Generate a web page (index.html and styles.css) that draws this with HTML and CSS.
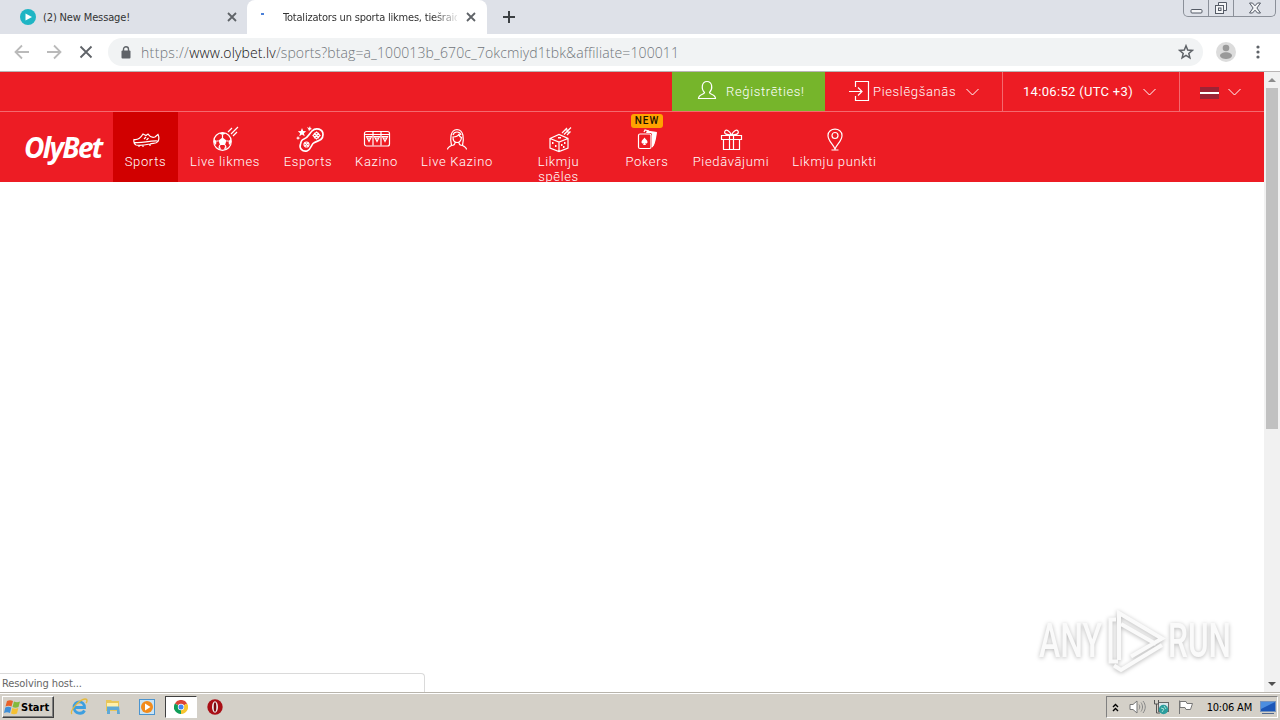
FILE: index.html
```html
<!DOCTYPE html>
<html lang="lv">

<head>
  <meta charset="UTF-8" />
  <title>Totalizators un sporta likmes</title>
  <link rel="stylesheet" href="styles.css">
</head>

<body>
  <!-- Tabs -->
  <div class="tabstrip">
    <div class="tab">
      <svg class="favicon" width="16" height="16" viewBox="0 0 16 16">
        <circle cx="8" cy="8" r="8" fill="#1fb5c4" />
        <path d="M5.5 4.5v7L12 8z" fill="#fff" />
      </svg>
      <span class="tab-title">(2) New Message!</span>
      <svg class="close" width="10" height="10" viewBox="0 0 10 10"><path d="M1 1l8 8M9 1L1 9" /></svg>
    </div>
    <div class="tab active">
      <span class="spinner"></span>
      <span class="tab-title fade">Totalizators un sporta likmes, tiešraid</span>
      <svg class="close" width="10" height="10" viewBox="0 0 10 10"><path d="M1 1l8 8M9 1L1 9" /></svg>
    </div>
    <svg class="new-tab" width="12" height="12" viewBox="0 0 12 12"><path d="M6 0v12M0 6h12" /></svg>
    <div class="window-buttons">
      <span class="wb-min"><svg width="13" height="14" viewBox="0 0 13 14"><rect x="1" y="8.5" width="11" height="3.5" rx="1" /></svg></span>
      <span class="wb-max"><svg width="14" height="14" viewBox="0 0 14 14"><path d="M4.500 4V1.500h8v8H10" /><rect x="1.500" y="4.500" width="8" height="8" /><rect x="4.500" y="7" width="2.500" height="2.500" /></svg></span>
      <span class="wb-close"><svg width="14" height="12" viewBox="0 0 14 12"><path d="M1.500 1h3L7 3.800 9.500 1h3L8.900 6l3.600 5h-3L7 8.200 4.500 11h-3L5.100 6z" /></svg></span>
    </div>
  </div>

  <!-- Toolbar -->
  <div class="toolbar">
    <svg class="tool-icon dim" width="16" height="16" viewBox="0 0 16 16"><path d="M15 8H2M8 1.500L1.500 8 8 14.500" /></svg>
    <svg class="tool-icon dim" width="16" height="16" viewBox="0 0 16 16"><path d="M1 8h13M8 1.500L14.500 8 8 14.500" /></svg>
    <svg class="tool-icon" width="16" height="16" viewBox="0 0 16 16"><path d="M2.500 2.500l11 11M13.500 2.500l-11 11" /></svg>
    <div class="omnibox">
      <svg width="10" height="13" viewBox="0 0 10 13">
        <rect x="0.500" y="4.500" width="9" height="8" rx="1" fill="#5f6368" />
        <path d="M2.500 5V3.200a2.500 2.500 0 0 1 5 0V5" fill="none" stroke="#5f6368" stroke-width="1.400" />
      </svg>
      <span class="url"><span class="scheme">https://</span><span class="host">www.olybet.lv</span><span class="path">/sports?btag=a_100013b_670c_7okcmiyd1tbk&amp;affiliate=100011</span></span>
      <svg class="star" width="16" height="16" viewBox="0 0 16 16"><path d="M8 1.800l1.700 4.300 4.600.3-3.500 3 1.100 4.500L8 11.400l-3.900 2.500 1.100-4.500-3.500-3 4.600-.3z" /></svg>
    </div>
    <svg class="avatar" width="20" height="20" viewBox="0 0 20 20">
      <circle cx="10" cy="10" r="10" fill="#dcdcdc" />
      <circle cx="10" cy="6" r="3.300" fill="#999" />
      <path d="M4 14c0-5 12-5 12 0-1 4-11 4-12 0z" fill="#999" />
    </svg>
    <svg class="menu-dots" width="4" height="14" viewBox="0 0 4 14"><circle cx="2" cy="2" r="1.600" /><circle cx="2" cy="7" r="1.600" /><circle cx="2" cy="12" r="1.600" /></svg>
  </div>

  <div class="viewport">
    <div class="page">
      <div class="topbar">
        <div class="register">
          <svg width="20" height="20" viewBox="0 0 20 20"><path d="M7.500 12.500C4 9 4.500 1.500 10 1.500S16 9 12.500 12.500c0 2 6 1.500 6 6h-17c0-4.500 6-4 6-6z" /></svg>
          <span>Reģistrēties!</span>
        </div>
        <div class="login">
          <svg width="21" height="21" viewBox="0 0 21 21"><path d="M6.500 6V.5h13v19h-13V15M0 10.500h12M9 6.500l4 4-4 4" /></svg>
          <span>Pieslēgšanās</span>
          <svg class="chevron" width="13" height="8" viewBox="0 0 13 8"><path d="M.5 1l6 6 6-6" /></svg>
        </div>
        <div class="clock">
          <span>14:06:52 (UTC +3)</span>
          <svg class="chevron" width="13" height="8" viewBox="0 0 13 8"><path d="M.5 1l6 6 6-6" /></svg>
        </div>
        <div class="lang">
          <span class="flag"></span>
          <svg class="chevron" width="13" height="8" viewBox="0 0 13 8"><path d="M.5 1l6 6 6-6" /></svg>
        </div>
      </div>

      <div class="nav">
        <div class="logo">OlyBet</div>
        <div class="nav-item active">
          <svg width="28" height="28" viewBox="0 0 28 28"><path d="M2 14.500c3 .5 6-.5 9-5.500l3 1.500 2-1.500c2 3 4 4 7 3l3-2.500c1 2 1 5 0 7-2 2.500-5 1.500-8 2.500-5 1-10 2-14 1-2-1-2.500-3-2-5.500zM2.500 17.500c8 1 14-2 23-1.500M12 14l2-2M14.500 15l2-2M7 20v2M11 20v2M18 19v2" /></svg>
          <span>Sports</span>
        </div>
        <div class="nav-item w-live">
          <svg width="28" height="28" viewBox="0 0 28 28"><circle cx="11.500" cy="16.500" r="8.800" /><path class="fill" d="M11.500 12.500l4 3-1.500 4.500H9l-1.500-4.500zM8 8.500l3.500 1.500L15 8.500l-3.500-1zM3 14l2.500 2-.5 4-2-2zM20 14l-2.500 2 .5 4 2-2zM7 23l2-1.500 1 3zM16 23l-2-1.500-1 3z" /><path d="M11.500 10v3M5.500 16h2M17.500 16h-2M9 20l-1 2M14 20l1 2M17 7l4-4M20 9l7-7M22 11l4-4" /></svg>
          <span>Live likmes</span>
        </div>
        <div class="nav-item w-esports">
          <svg width="28" height="28" viewBox="0 0 28 28"><path class="bold" d="M8 14c4-1 5-5 8-8 4-4 11-2 11 3.500 0 7-7 6-10 9-2 2-2 6-6 7.500-5 1-8-3-6.500-7 .5-2.500 1.500-4.500 3.500-5z" /><circle cx="10.500" cy="19.500" r="2.500" /><path d="M9 18l3 3M12 18l-3 3M18 8l5 5M23 8l-5 5M20.500 7l3.500 3.500-3.500 3.500L17 10.500z" /><path class="fill" d="M6 3l1.200 3 3 .2-2.300 2 .8 3L6 9.500l-2.700 1.700.8-3-2.300-2 3-.2zM11 2l2 1 1-2 .5 2 1.500 1-2 .7-1 1.500-.5-1.700zM2 11l.7 1.500 1.800.5-1.800.7L2 15l-.7-1.300L0 13l1.300-.5z" /></svg>
          <span>Esports</span>
        </div>
        <div class="nav-item w-kazino">
          <svg width="28" height="28" viewBox="0 0 28 28"><rect x="1.500" y="6.500" width="25" height="14.500" rx="2" /><path d="M1.500 9.500h25M10 6.500v14M18 6.500v14M3.500 11.500h5L6 16.500zM11.500 11.500h5l-2.500 5zM19.500 11.500h5l-2.500 5zM5 13h2M13 13h2M21 13h2" /></svg>
          <span>Kazino</span>
        </div>
        <div class="nav-item w-livekaz">
          <svg width="28" height="28" viewBox="0 0 28 28"><path d="M4.500 24.500c0-2 2-3 4-4C7 14 7 5 14 4.500 21 5 21 14 19.500 20.500c2 1 4 2 4 4M8.500 20.500c3 0 3.500-1 3.500-3M19.500 20.500c-3 0-3.500-1-3.500-3M10 12c4 0 5-1 6-3 0 2 1 3 2.500 3.500C18 16 16 17.500 14 17.500S10 16 10 12zM10 10c1-4 7-4 8 0" /></svg>
          <span>Live Kazino</span>
        </div>
        <div class="nav-item w-speles">
          <svg width="28" height="28" viewBox="0 0 28 28"><path d="M5 13.500l9-4 9 4v9.500l-9 3.500L5 23zM5 13.500l9 3.500 9-3.500M14 17v9.500M17 8l5-5M19 9.500l7-7M22 10l3.500-3.500M20 5h3M22 7h3" /><path class="fill" d="M13 12h3v1.500h-3zM7 17h1.500v2H7zM10 20h1.500v2H10zM16 19h1.500v2H16zM19 17h1.500v2H19zM18 21h1.500v2H18z" /></svg>
          <span>Likmju spēles</span>
        </div>
        <div class="nav-item w-pokers">
          <span class="badge">NEW</span>
          <svg width="28" height="28" viewBox="0 0 28 28"><rect x="5.500" y="9" width="12.500" height="14.500" rx="1.500" /><path class="fill" d="M11.500 12.500c1 2 3 2.500 3 4.500 0 1.500-1.500 2-2.500 1l1 2h-3l1-2c-1 1-2.500.5-2.500-1 0-2 2-2.500 3-4.500zM14 5.500l10 1.500-3 13-2 2V9.500c0-1-1-1.500-2-1.500h-4z" /><path d="M11 7l1-2 4 1M19 22c2-2 4-9 4-14" /></svg>
          <span>Pokers</span>
        </div>
        <div class="nav-item w-offers">
          <svg width="28" height="28" viewBox="0 0 28 28"><path d="M4.500 10.500h20v4h-20zM6.500 14.500h16v10h-16zM12.500 10.500v14M16.500 10.500v14M14.500 10c-2-4-5-6-6.500-4-1.500 3 2 4 6.500 4s8-1 6.500-4c-1.500-2-4.500 0-6.500 4z" /></svg>
          <span>Piedāvājumi</span>
        </div>
        <div class="nav-item w-punkti">
          <svg width="28" height="28" viewBox="0 0 28 28"><path d="M14 24c-2-5-7-8-7-13.500C7 2 21 2 21 10.500 21 16 16 19 14 24zM10.500 25h7" /><circle cx="14" cy="10.500" r="3" /></svg>
          <span>Likmju punkti</span>
        </div>
      </div>
    </div>

    <div class="scrollbar">
      <span class="arrow-up"></span>
      <div class="thumb"></div>
      <span class="arrow-down"></span>
    </div>

    <div class="status">Resolving host...</div>

    <svg class="watermark" width="210" height="70" viewBox="0 0 210 70">
      <text x="9" y="52" textLength="63" lengthAdjust="spacingAndGlyphs">ANY</text>
      <path d="M88 56.500h-7.500V14.500H86M89 55V8l43 25.500-31 18M84 60.500l7 4.500 41-25M91 19l35 20" />
      <text x="138" y="52" textLength="63" lengthAdjust="spacingAndGlyphs">RUN</text>
    </svg>
  </div>

  <!-- Taskbar -->
  <div class="taskbar">
    <div class="start">
      <svg width="17" height="17" viewBox="0 0 17 17">
        <path d="M3 2c2-1 4-1 6 0L7.500 7.500c-2-1-4-1-6 0z" fill="#e8622a" />
        <path d="M10 2.500c2 1 4 1 6 0L14.500 8c-2 1-4 1-6 0z" fill="#83b93c" />
        <path d="M1.300 8.500c2-1 4-1 6 0L6 14c-2-1-4-1-6 0z" fill="#3f8fd8" />
        <path d="M8.300 9c2 1 4 1 6 0L13 14.500c-2 1-4 1-6 0z" fill="#f5c032" />
      </svg>
      <span>Start</span>
    </div>
    <div class="launch">
      <svg width="18" height="18" viewBox="0 0 18 18"><path d="M14.500 12.500c-2 4-10 4-10.500-3C4 2 14.500 2 14.500 9.500H5" fill="none" stroke="#3d9fe0" stroke-width="2.800" /><path d="M2 16C-1 13 10 1 15 1c3 0 2 3 1 4" fill="none" stroke="#e5b93c" stroke-width="1.300" /></svg>
    </div>
    <div class="launch">
      <svg width="18" height="18" viewBox="0 0 18 18"><path d="M2 2h5l1 1h7v10H2z" fill="#e8c65a" /><path d="M3 5h11v4H3z" fill="#fff0ad" /><path d="M3 8.500h12l1 7.500h-3v-4H6v4H3z" fill="#5fa9d6" /></svg>
    </div>
    <div class="launch">
      <svg width="18" height="18" viewBox="0 0 18 18"><rect x="1.500" y="1.500" width="15" height="15" fill="#c9e4f6" stroke="#4b94cf" /><circle cx="9" cy="9" r="6" fill="#f28b1c" /><path d="M7 5.500v7L12.500 9z" fill="#fff" /></svg>
    </div>
    <div class="launch pressed">
      <svg width="14" height="14" viewBox="0 0 14 14"><path d="M7 7L.9 3.500A7 7 0 0 1 13.100 3.500z" fill="#db4437" /><path d="M7 7L.9 3.500A7 7 0 0 0 7 14z" fill="#0f9d58" /><path d="M7 7h0L13.100 3.500A7 7 0 0 1 7 14z" fill="#f7c52f" /><circle cx="7" cy="7" r="3.200" fill="#fff" /><circle cx="7" cy="7" r="2.500" fill="#4285f4" /></svg>
    </div>
    <div class="launch">
      <svg width="16" height="16" viewBox="0 0 16 16"><circle cx="8" cy="8" r="7.700" fill="#a90f16" /><ellipse cx="8" cy="8" rx="3" ry="5.800" fill="#eee" /><ellipse cx="8" cy="8" rx="1.300" ry="4.700" fill="#7b0a0f" /></svg>
    </div>
    <div class="tray">
      <svg width="7" height="9" viewBox="0 0 7 9"><path d="M1 4l2.500-2.500L6 4M1 8l2.500-2.500L6 8" fill="none" stroke="#000" stroke-width="1.400" /></svg>
      <svg class="speaker" width="17" height="16" viewBox="0 0 17 16"><path d="M1 5.500h3L8 2v12l-4-3.500H1z" fill="#fff" stroke="#777" /><path d="M10 5.500c1 1.500 1 3.500 0 5M12 3.500c2 3 2 6 0 9M14 2c3 4 3 8 0 12" fill="none" stroke="#888" /></svg>
      <svg class="network" width="17" height="16" viewBox="0 0 17 16"><rect x="5.500" y="3.500" width="10" height="9" fill="#d9e6ea" stroke="#666" /><path d="M1.500 1v4h4V1M3.500 5v9H7" fill="none" stroke="#555" /><circle cx="10.500" cy="10.500" r="4.700" fill="#2b9d9d" /><path d="M8 9l3 1-2 3M11 7l2 3" fill="none" stroke="#a8e0d2" /></svg>
      <svg class="flag-icon" width="17" height="16" viewBox="0 0 17 16"><path d="M2.500 15V1.500M3 2.500h6l1 2h5.500l-2 6H9l-1-2H3z" fill="#fff" stroke="#777" /></svg>
      <span class="time">10:06 AM</span>
      <svg class="monitor" width="16" height="14" viewBox="0 0 16 14"><rect x="0.500" y="1.500" width="15" height="10" fill="#1c57b8" stroke="#7794bd" /><path d="M1 2h14L1 9z" fill="#4c8ee0" /><path d="M2 13.500h12" stroke="#52698e" /></svg>
    </div>
  </div>
</body>

</html>
```
FILE: styles.css
```css
* {
  box-sizing: border-box;
}

body {
  margin: 0;
  width: 1280px;
  height: 720px;
  display: flex;
  flex-direction: column;
  overflow: hidden;
  background: #fff;
  font-family: "Noto Sans", sans-serif;
}

svg {
  flex: none;
  display: block;
}

/* tabs */
.tabstrip {
  height: 34px;
  flex: none;
  display: flex;
  background: #dee1e8;
}

.tab {
  width: 247px;
  height: 34px;
  padding: 0 10px 0 20px;
  display: flex;
  align-items: center;
}

.tab.active {
  width: 240px;
  padding: 0 11px 0 14px;
  background: #fff;
  border-radius: 8px 8px 0 0;
}

.tab-title {
  flex: 1;
  margin-left: 7px;
  font-family: "DejaVu Sans Condensed", "DejaVu Sans", sans-serif;
  font-stretch: condensed;
  font-size: 11px;
  letter-spacing: -0.14px;
  color: #333;
  white-space: nowrap;
  overflow: hidden;
}

.tab-title.fade {
  margin: 0 9px 0 19px;
  letter-spacing: -0.2px;
  mask-image: linear-gradient(to right, #000 150px, transparent 178px);
}

.spinner {
  width: 3px;
  height: 2px;
  margin-bottom: 6px;
  background: #4a80d8;
}

.close {
  stroke: #5f6368;
  stroke-width: 1.8;
}

.new-tab {
  margin: 11px 0 0 16px;
  stroke: #3c4043;
  stroke-width: 2;
}

.window-buttons {
  display: flex;
  height: 17px;
  margin: 0 4px 0 auto;
  border: 1px solid #8b9099;
  border-top: none;
  border-radius: 0 0 5px 5px;
}

.window-buttons span {
  width: 25px;
  display: flex;
  align-items: center;
  justify-content: center;
  border-right: 1px solid #8b9099;
}

.window-buttons .wb-close {
  width: 41px;
  border-right: none;
}

.window-buttons svg {
  fill: #f4f5f7;
  stroke: #555b66;
}

/* toolbar */
.toolbar {
  height: 38px;
  flex: none;
  display: flex;
  align-items: center;
  padding: 0 20px 1px 14px;
  border-bottom: 1px solid #b9b5b5;
}

.tool-icon {
  margin-right: 16px;
  fill: none;
  stroke: #5f6368;
  stroke-width: 1.8;
}

.tool-icon.dim {
  stroke: #bababa;
}

.omnibox {
  width: 1095px;
  height: 28px;
  margin-left: -2px;
  padding: 0 9px 0 13px;
  display: flex;
  align-items: center;
  background: #f1f3f4;
  border-radius: 14px;
}

.url {
  margin-left: 10px;
  font-family: "Open Sans", "Noto Sans", sans-serif;
  font-weight: 300;
  font-size: 14px;
  letter-spacing: 0.12px;
  color: #70757a;
  white-space: nowrap;
}

.host {
  color: #111;
}

.scheme {
  letter-spacing: 0.35px;
}

.star {
  margin-left: auto;
  fill: none;
  stroke: #5f6368;
  stroke-width: 1.5;
}

.avatar {
  margin-left: 13px;
}

.menu-dots {
  margin-left: auto;
  fill: #5f6368;
}

/* site */
.viewport {
  position: relative;
  height: 620px;
  display: flex;
}

.page {
  width: 1264px;
  font-family: Roboto, sans-serif;
  font-size: 13px;
  color: #fff;
}

.topbar {
  height: 40px;
  display: flex;
  justify-content: flex-end;
  background: #ed1c24;
  border-bottom: 1px solid #f4696e;
}

.topbar > div {
  display: flex;
  align-items: center;
  white-space: nowrap;
}

.topbar svg,
.nav-item svg {
  fill: none;
  stroke: #fff;
  stroke-width: 1.2;
}

.topbar .register {
  width: 153px;
  padding: 0 0 0 25px;
  background: #76b52b;
}

.register svg {
  margin: -4px 9px 0 0;
}

.register span,
.login span {
  font-weight: 300;
  letter-spacing: 0.65px;
}

.topbar .login {
  width: 178px;
  padding-left: 24px;
  border-right: 1px solid #f4696e;
}

.login span {
  margin-left: 3px;
}

.topbar .clock {
  width: 177px;
  padding-left: 20px;
  border-right: 1px solid #f4696e;
}

.clock span {
  letter-spacing: 0.31px;
}

.topbar .lang {
  width: 84px;
  padding-left: 20px;
}

.topbar .chevron {
  margin-left: 10px;
  stroke-width: 1;
}

.flag {
  width: 19px;
  height: 12px;
  margin-top: 2px;
  background: linear-gradient(#9c2335 5px, #fff 5px, #fff 7px, #9c2335 7px);
}

.topbar .lang .chevron {
  margin-left: 9px;
}

.nav {
  height: 70px;
  display: flex;
  background: #ed1c24;
  overflow: hidden;
}

.logo {
  width: 113px;
  padding: 17px 0 0 24px;
  font-family: "Noto Sans", sans-serif;
  font-size: 28px;
  line-height: 36px;
  font-weight: 700;
  font-style: italic;
  letter-spacing: -1.7px;
}

.nav-item {
  position: relative;
  width: 65px;
  padding-top: 13px;
  display: flex;
  flex-direction: column;
  align-items: center;
  font-weight: 300;
  line-height: 15px;
  letter-spacing: 0.65px;
  text-align: center;
}

.nav-item svg {
  margin-bottom: 1px;
}

.nav-item .fill {
  fill: #fff;
  stroke: none;
}

.nav-item .bold {
  stroke-width: 1.7;
}

.nav-item.active {
  background: #d10000;
}

.w-live { width: 94px; }
.w-esports { width: 72px; }
.w-kazino { width: 65px; }
.w-livekaz { width: 96px; }
.w-speles { width: 107px; padding-left: 24px; padding-right: 24px; }
.w-pokers { width: 70px; }
.w-offers { width: 98px; }
.w-punkti { width: 109px; }

.w-esports svg {
  margin-left: 3px;
}

.badge {
  position: absolute;
  top: 2px;
  left: 19px;
  width: 32px;
  height: 14px;
  border-radius: 3px;
  background: #ffa200;
  color: #1b1200;
  font-size: 10px;
  font-weight: 500;
  line-height: 14px;
  letter-spacing: 1px;
}

/* scrollbar */
.scrollbar {
  width: 16px;
  padding: 6px 2px 6px;
  display: flex;
  flex-direction: column;
  align-items: center;
  background: #f1f1f1;
}

.arrow-up {
  border: 4px solid transparent;
  border-top: none;
  border-bottom: 4px solid #8c8c8c;
}

.thumb {
  width: 12px;
  height: 341px;
  margin-top: 6px;
  background: #c1c1c1;
}

.arrow-down {
  margin-top: auto;
  border: 4px solid transparent;
  border-bottom: none;
  border-top: 4px solid #505050;
}

.status {
  position: absolute;
  left: 0;
  bottom: 0;
  width: 425px;
  height: 19px;
  padding-left: 2px;
  border: 1px solid #dadada;
  border-width: 1px 1px 0 0;
  border-radius: 0 4px 0 0;
  background: #fff;
  color: #666;
  font-family: "DejaVu Sans Condensed", "DejaVu Sans", sans-serif;
  font-stretch: condensed;
  font-size: 11px;
  line-height: 19px;
  letter-spacing: -0.1px;
}

.watermark {
  position: absolute;
  left: 1030px;
  top: 533px;
  filter: drop-shadow(0 1px 2px rgba(0, 0, 0, 0.28));
}

.watermark text {
  font-family: Roboto, sans-serif;
  font-size: 48px;
  font-weight: 500;
  fill: #fafafa;
}

.watermark path {
  fill: none;
  stroke: #fafafa;
  stroke-width: 4;
}

/* taskbar */
.taskbar {
  height: 28px;
  flex: none;
  display: flex;
  align-items: center;
  padding: 1px 2px 0;
  background: #d4d0c8;
  border-top: 1px solid #b8b4ac;
  box-shadow: inset 0 1px #fff;
}

.start {
  width: 52px;
  height: 22px;
  margin-right: 9px;
  padding-left: 1px;
  display: flex;
  align-items: center;
  border: 1px solid;
  border-color: #fff #404040 #404040 #fff;
  box-shadow: inset -1px -1px #808080;
  font-family: "DejaVu Sans Condensed", "DejaVu Sans", sans-serif;
  font-stretch: condensed;
  font-size: 11px;
  font-weight: bold;
}

.launch {
  width: 32px;
  height: 22px;
  margin-right: 2px;
  display: flex;
  align-items: center;
  justify-content: center;
}

.launch.pressed {
  background: #fff;
  border: 1px solid;
  border-color: #404040 #fff #fff #404040;
}

.tray {
  width: 172px;
  height: 22px;
  margin-left: auto;
  padding: 0 1px 0 5px;
  display: flex;
  align-items: center;
  border: 1px solid;
  border-color: #808080 #fff #fff #808080;
}

.speaker {
  margin-left: 10px;
}

.network,
.flag-icon {
  margin-left: 7px;
}

.time {
  margin-left: auto;
  font-family: "DejaVu Sans Condensed", "DejaVu Sans", sans-serif;
  font-stretch: condensed;
  font-size: 11px;
  letter-spacing: -0.2px;
}

.monitor {
  margin-left: 8px;
}
```
